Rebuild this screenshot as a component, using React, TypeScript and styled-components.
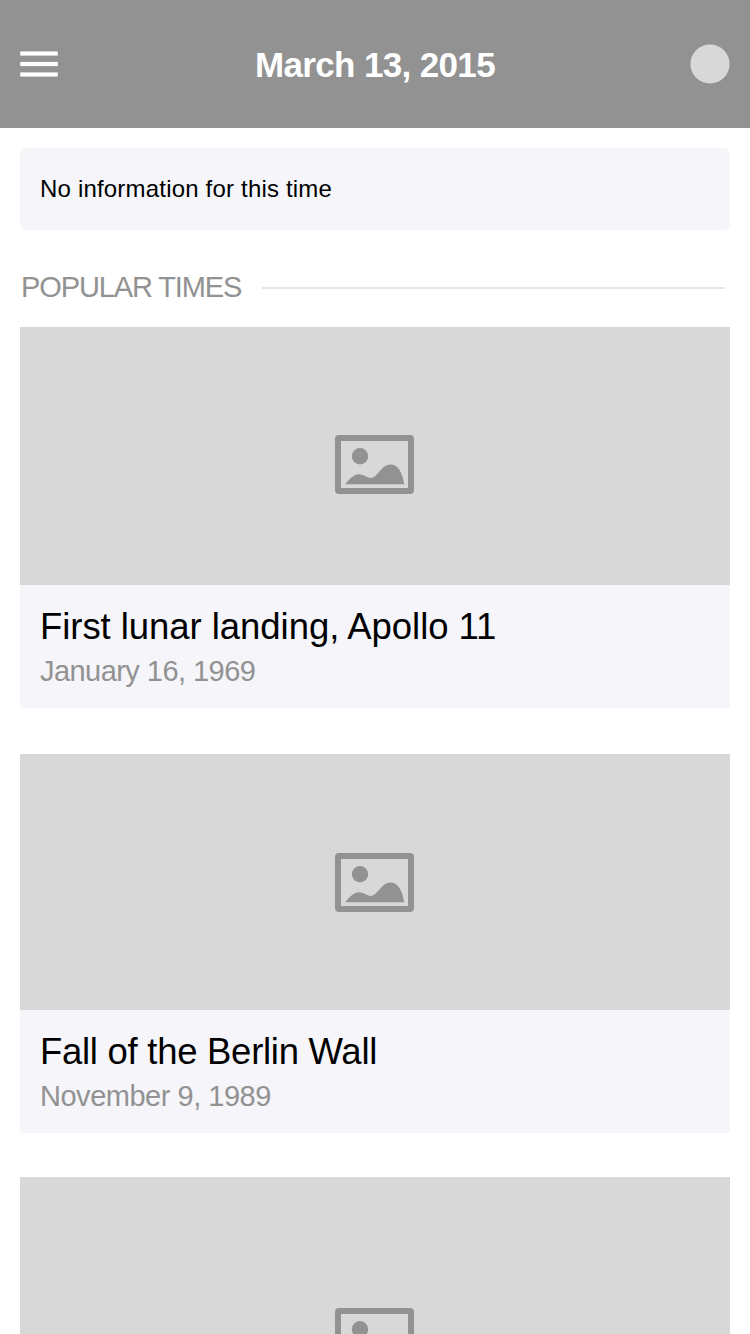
import React from "react";
import styled, { createGlobalStyle } from "styled-components";

const GlobalStyle = createGlobalStyle`
  * { box-sizing: border-box; }
  html, body { margin: 0; background: #fff; }
  body {
    height: 1334px;
    overflow: hidden;
    font-family: "Helvetica Neue", "Liberation Sans", Arial, sans-serif;
    color: #000;
  }
`;

const Screen = styled.div`
  width: 750px;
  height: 1334px;
  overflow: hidden;
  background: #fff;
`;

const Header = styled.header`
  display: grid;
  grid-template-columns: 60px 1fr 60px;
  align-items: center;
  height: 128px;
  padding: 0 20px;
  background: #929292;
`;

const MenuButton = styled.button`
  display: block;
  width: 38px;
  height: 26px;
  padding: 0;
  border: 0;
  background: none;

  svg { display: block; }
`;

const HeaderTitle = styled.h1`
  margin: 0;
  padding-top: 2px;
  text-align: center;
  font-size: 35px;
  line-height: 42px;
  font-weight: 700;
  letter-spacing: -0.65px;
  white-space: nowrap;
  color: #fff;
`;

const Avatar = styled.svg`
  display: block;
  justify-self: end;
  fill: #d8d8d8;
`;

const Content = styled.main`
  display: flex;
  flex-direction: column;
  padding: 20px 20px 0;
`;

const Notice = styled.p`
  display: flex;
  align-items: center;
  height: 82px;
  margin: 0;
  padding: 0 20px;
  border-radius: 7px;
  background: #f5f5fa;
  font-size: 24px;
  line-height: 30px;
  letter-spacing: 0.19px;
`;

const SectionHeading = styled.div`
  display: flex;
  align-items: center;
  height: 34px;
  margin: 41px 5px 22px 0;
`;

const SectionTitle = styled.h2`
  flex: 0 0 242px;
  margin: 0;
  padding: 0 0 2px 1px;
  font-size: 29px;
  line-height: 34px;
  font-weight: 400;
  letter-spacing: -1.12px;
  white-space: nowrap;
  color: #929292;
`;

const Rule = styled.div`
  flex: 1;
  height: 2px;
  background: #e6e6e6;
`;

const Card = styled.article<{ $gap: number }>`
  margin-bottom: ${(p) => p.$gap}px;
  background: #f5f5fa;
`;

const Placeholder = styled.div<{ $height: number; $iconTop: number }>`
  display: flex;
  justify-content: center;
  align-items: flex-start;
  height: ${(p) => p.$height}px;
  padding: ${(p) => p.$iconTop}px 1px 0 0;
  background: #d8d8d8;
`;

const Caption = styled.div`
  height: 123px;
  padding: 20px 20px 0;
`;

const CardTitle = styled.h3<{ $tracking: number }>`
  margin: 0;
  font-size: 36.5px;
  line-height: 44px;
  font-weight: 400;
  letter-spacing: ${(p) => p.$tracking}px;
  white-space: nowrap;
`;

const CardDate = styled.p<{ $tracking: number }>`
  margin: 5px 0 0;
  font-size: 29px;
  line-height: 34px;
  letter-spacing: ${(p) => p.$tracking}px;
  white-space: nowrap;
  color: #929292;
`;

const MenuIcon = () => (
  <svg width="38" height="26" viewBox="0 0 38 26" fill="#fff">
    <rect x="0.2" y="0.4" width="37.6" height="4.2" />
    <rect x="0.2" y="10.9" width="37.6" height="4.2" />
    <rect x="0.2" y="21.4" width="37.6" height="4.2" />
  </svg>
);

const PictureIcon = () => (
  <svg width="79" height="59" viewBox="0 0 79 59" fill="#929292">
    <rect x="3" y="3" width="73" height="53" rx="1" fill="none" stroke="#929292" strokeWidth="6" strokeLinejoin="round" />
    <circle cx="25" cy="21.2" r="8.2" />
    <path d="M10.3 49.2 C14.500 43.800 19 39.300 24 39.300 C29 39.300 31.500 42.900 36 42.900 C42.500 42.900 46 29.600 55.800 29.600 C63.500 29.600 67.500 38.500 69.200 49.200 Z" />
  </svg>
);

const times = [
  { title: "First lunar landing, Apollo 11", date: "January 16, 1969", height: 258, iconTop: 108, gap: 46, titleTracking: -0.05, dateTracking: -0.55 },
  { title: "Fall of the Berlin Wall", date: "November 9, 1989", height: 256, iconTop: 99, gap: 44, titleTracking: -0.28, dateTracking: -0.48 },
  { height: 258, iconTop: 131, gap: 0 },
];

export default function App() {
  return (
    <Screen>
      <GlobalStyle />
      <Header>
        <MenuButton aria-label="Menu">
          <MenuIcon />
        </MenuButton>
        <HeaderTitle>March 13, 2015</HeaderTitle>
        <Avatar width="40" height="40" viewBox="0 0 40 40">
          <circle cx="20" cy="20" r="19.6" />
        </Avatar>
      </Header>
      <Content>
        <Notice>No information for this time</Notice>
        <SectionHeading>
          <SectionTitle>POPULAR TIMES</SectionTitle>
          <Rule />
        </SectionHeading>
        {times.map((t, i) => (
          <Card key={i} $gap={t.gap}>
            <Placeholder $height={t.height} $iconTop={t.iconTop}>
              <PictureIcon />
            </Placeholder>
            {t.title && (
              <Caption>
                <CardTitle $tracking={t.titleTracking ?? 0}>{t.title}</CardTitle>
                <CardDate $tracking={t.dateTracking ?? 0}>{t.date}</CardDate>
              </Caption>
            )}
          </Card>
        ))}
      </Content>
    </Screen>
  );
}
